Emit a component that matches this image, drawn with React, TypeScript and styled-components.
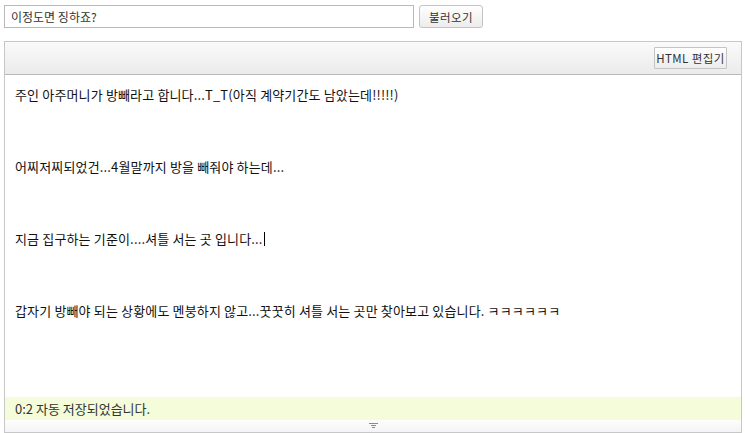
import React from 'react';
import styled, { createGlobalStyle } from 'styled-components';

const GlobalStyle = createGlobalStyle`
  html, body {
    margin: 0;
    padding: 0;
    background: #fff;
  }
  body {
    font-family: "Noto Sans CJK KR", "Noto Sans", sans-serif;
    font-size: 12px;
    color: #222;
  }
`;

const Page = styled.div`
  padding: 5px 4px 0 4px;
  width: 738px;
`;

const TopRow = styled.div`
  display: flex;
  align-items: center;
  gap: 5px;
`;

const TitleInput = styled.div`
  box-sizing: border-box;
  width: 410px;
  height: 23px;
  border: 1px solid #b9b9b9;
  padding: 0 6px;
  display: flex;
  align-items: center;
  font-size: 12px;
  color: #333;
`;

const Button = styled.div<{ $width: number; $height?: number; $radius?: number }>`
  box-sizing: border-box;
  width: ${p => p.$width}px;
  height: ${p => p.$height ?? 23}px;
  border: 1px solid #c4c4c4;
  border-radius: ${p => p.$radius ?? 3}px;
  background: linear-gradient(#ffffff, #ececec);
  display: flex;
  align-items: center;
  justify-content: center;
  white-space: nowrap;
  font-size: 11.5px;
  color: #333;
  letter-spacing: 0.4px;
`;

const Editor = styled.div`
  margin-top: 13px;
  box-sizing: border-box;
  width: 738px;
  height: 392px;
  border: 1px solid #c7c7c7;
  display: flex;
  flex-direction: column;
`;

const Toolbar = styled.div`
  height: 32px;
  border-bottom: 1px solid #b8b8b8;
  background: linear-gradient(#fafafa, #ebebeb);
  display: flex;
  align-items: center;
  justify-content: flex-end;
  padding-right: 14px;
`;

const Content = styled.div`
  flex: 1;
  padding: 11px 10px 0 10px;
  line-height: 18px;
  font-size: 13px;
  letter-spacing: 0.15px;
  color: #111;
`;

const Para = styled.p`
  margin: 0 0 54px 0;
  white-space: nowrap;
`;

const Caret = styled.span`
  display: inline-block;
  width: 1px;
  height: 14px;
  background: #000;
  vertical-align: -2px;
  margin-left: 1px;
`;

const Status = styled.div`
  height: 23px;
  background: #f4fcd9;
  display: flex;
  align-items: center;
  padding-left: 10px;
  font-size: 13px;
  color: #333;
`;

const Resizer = styled.div`
  height: 12px;
  background: linear-gradient(#fdfdfd, #f4f4f4);
  display: flex;
  align-items: center;
  justify-content: center;
`;

const lines = [
  '주인 아주머니가 방빼라고 합니다...T_T(아직 계약기간도 남았는데!!!!!)',
  '어찌저찌되었건...4월말까지 방을 빼줘야 하는데...',
  '지금 집구하는 기준이....셔틀 서는 곳 입니다...',
  '갑자기 방빼야 되는 상황에도 멘붕하지 않고...꿋꿋히 셔틀 서는 곳만 찾아보고 있습니다. ㅋㅋㅋㅋㅋㅋ',
];

export default function App() {
  return (
    <>
      <GlobalStyle />
      <Page>
        <TopRow>
          <TitleInput>이정도면 징하죠?</TitleInput>
          <Button $width={64}>불러오기</Button>
        </TopRow>
        <Editor>
          <Toolbar>
            <Button $width={73} $height={22} $radius={1}>HTML 편집기</Button>
          </Toolbar>
          <Content>
            {lines.map((l, i) => (
              <Para key={i}>
                {l}
                {i === 2 && <Caret />}
              </Para>
            ))}
          </Content>
          <Status>0:2 자동 저장되었습니다.</Status>
          <Resizer>
            <svg width="9" height="6" viewBox="0 0 9 6">
              <rect x="0" y="0" width="9" height="1" fill="#8a8a8a" />
              <rect x="2" y="2" width="5" height="1" fill="#8a8a8a" />
              <rect x="3" y="4" width="3" height="1" fill="#8a8a8a" />
            </svg>
          </Resizer>
        </Editor>
      </Page>
    </>
  );
}
